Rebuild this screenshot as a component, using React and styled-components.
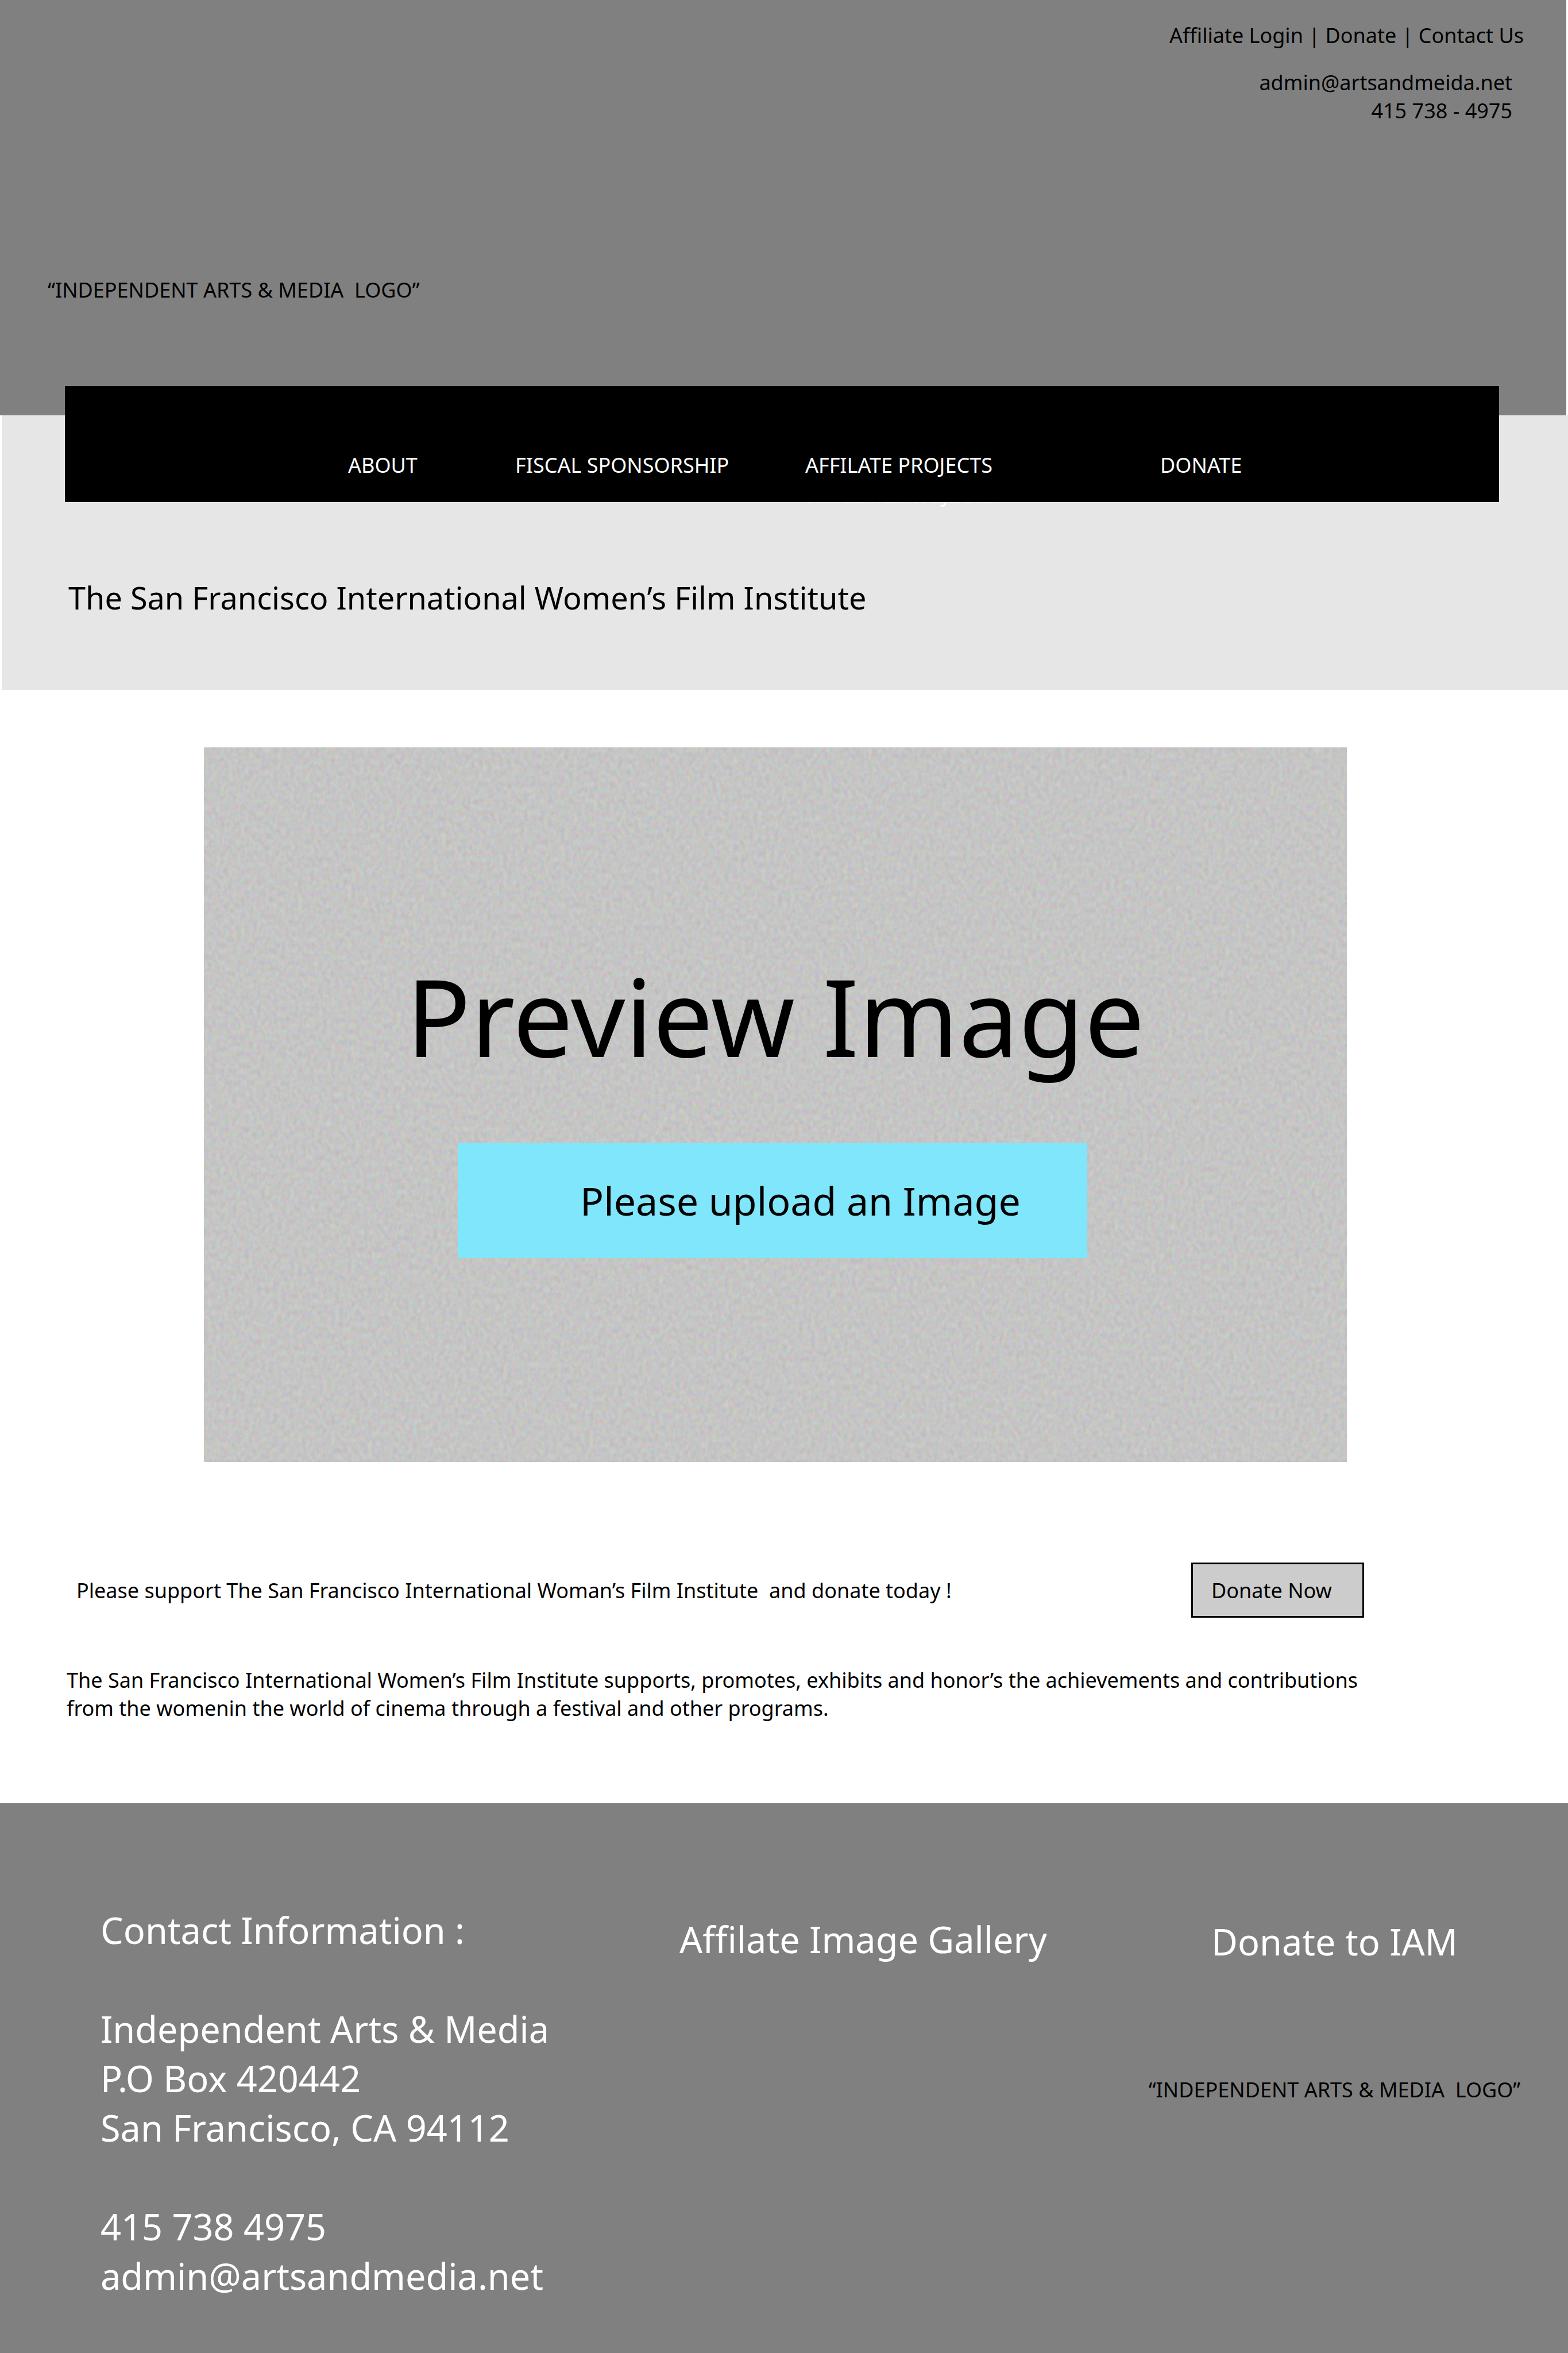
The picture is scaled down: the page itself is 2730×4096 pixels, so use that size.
import React from "react";
import styled, { createGlobalStyle } from "styled-components";

const GlobalStyle = createGlobalStyle`
  *, *::before, *::after { box-sizing: border-box; }
  body {
    margin: 0;
    background: #fff;
    color: #000;
    font-family: "Noto Sans", "Open Sans", sans-serif;
    font-size: 36px;
    line-height: 49px;
  }
  h1, h2, p, ul { margin: 0; padding: 0; font-weight: 400; }
  ul { list-style: none; }
  a { color: inherit; text-decoration: none; }
  button { font-family: inherit; color: inherit; cursor: pointer; text-align: left; }
`;

const Header = styled.header`
  display: flex;
  flex-direction: column;
  margin-right: 3px;
  padding: 37px 74px 194px 83px;
  background: #808080;
`;

const UtilityNav = styled.nav`
  align-self: flex-end;
  white-space: pre;
`;

const HeaderContact = styled.address`
  display: flex;
  flex-direction: column;
  align-items: flex-end;
  margin-top: 33px;
  padding-right: 20px;
  font-style: normal;
`;

const Logo = styled.p`
  white-space: pre-wrap;
`;

const HeaderLogo = styled(Logo)`
  margin-top: 263px;
`;

const Intro = styled.section`
  display: flow-root;
  isolation: isolate;
  margin-left: 3px;
  padding-bottom: 125px;
  background: #e6e6e6;
`;

const MainNav = styled.nav`
  position: relative;
  margin: -51px 120px 0 110px;
  padding: 113px 0 40px;
  background: #000;
  color: #fff;
`;

const NavList = styled.ul`
  display: grid;
  grid-template-columns: 493fr 291fr 505fr 618fr 590fr;
`;

const NavItem = styled.li`
  position: relative;

  &:first-child { grid-column: 2; }
`;

/* Second copy of a label that peeks out from under the bar. */
const Echo = styled.span`
  position: absolute;
  z-index: -1;
  top: 52px;
  left: 5px;
`;

const PageTitle = styled.h1`
  margin: 130px 116px 0;
  font-size: 54px;
  line-height: 72px;
`;

const Preview = styled.section`
  position: relative;
  isolation: isolate;
  display: flex;
  flex-direction: column;
  align-items: center;
  aspect-ratio: 1990 / 1244;
  margin: 100px 385px 0 355px;
  padding-top: 367px;
  background: #c5c5c4;
`;

const Grain = styled.svg`
  position: absolute;
  z-index: -1;
  inset: 0;
  width: 100%;
  height: 100%;
`;

const PreviewTitle = styled.h2`
  font-size: 186px;
  line-height: 200px;
`;

const UploadButton = styled.button`
  align-self: flex-start;
  width: 1096px;
  height: 200px;
  margin: 122px 0 0 442px;
  padding: 0 0 0 213px;
  border: 0;
  background: #7fe6fb;
  font-size: 68px;
  line-height: 100px;
`;

const Support = styled.section`
  display: flex;
  align-items: center;
  justify-content: space-between;
  margin: 175px 355px 0 133px;
`;

const SupportText = styled.p`
  white-space: pre-wrap;
`;

const DonateButton = styled.button`
  width: 301px;
  height: 96px;
  padding: 0 0 0 32px;
  border: 3px solid #000;
  background: #ccc;
  font-size: 36px;
  line-height: 49px;
`;

const Description = styled.p`
  margin: 84px 355px 141px 116px;
`;

const Footer = styled.footer`
  display: grid;
  grid-template-columns: 1008fr 816fr 649fr;
  padding: 178px 82px 91px 175px;
  background: #808080;
`;

const FooterColumn = styled.div`
  display: flex;
  flex-direction: column;
  align-items: ${(p) => (p.$centered ? "center" : "flex-start")};
  padding-top: ${(p) => p.$top || 0}px;
`;

const FooterTitle = styled.h2`
  color: #fff;
  font-size: 63px;
  line-height: 86px;
`;

const FooterContact = styled.address`
  display: flex;
  flex-direction: column;
  margin-top: 86px;
  color: #fff;
  font-size: 63px;
  font-style: normal;
  line-height: 86px;
`;

const FooterLogo = styled(Logo)`
  margin-top: 190px;
`;

const logoText = "“INDEPENDENT ARTS & MEDIA  LOGO”";

const navItems = [
  { label: "ABOUT" },
  { label: "FISCAL SPONSORSHIP" },
  { label: "AFFILATE PROJECTS", echo: true },
  { label: "DONATE" },
];

export default function App() {
  return (
    <>
      <GlobalStyle />
      <Header>
        <UtilityNav aria-label="Account">
          <a href="#login">Affiliate Login</a> | <a href="#donate">Donate</a> | <a href="#contact">Contact Us</a>
        </UtilityNav>
        <HeaderContact>
          <a href="mailto:admin@artsandmeida.net">admin@artsandmeida.net</a>
          <a href="tel:4157384975">415 738 - 4975</a>
        </HeaderContact>
        <HeaderLogo>{logoText}</HeaderLogo>
      </Header>

      <main>
        <Intro>
          <MainNav aria-label="Main">
            <NavList>
              {navItems.map(({ label, echo }) => (
                <NavItem key={label}>
                  <a href="#top">{label}</a>
                  {echo && <Echo aria-hidden="true">{label}</Echo>}
                </NavItem>
              ))}
            </NavList>
          </MainNav>
          <PageTitle>The San Francisco International Women’s Film Institute</PageTitle>
        </Intro>

        <Preview>
          <Grain aria-hidden="true">
            <filter id="grain" x="0" y="0" width="100%" height="100%" colorInterpolationFilters="sRGB">
              <feTurbulence type="fractalNoise" baseFrequency="0.14 0.1" numOctaves="3" seed="4" />
              <feColorMatrix values="0.13 0 0 0 0.707  0 0.13 0 0 0.707  0 0 0.13 0 0.704  0 0 0 0 1" />
            </filter>
            <rect width="100%" height="100%" filter="url(#grain)" />
          </Grain>
          <PreviewTitle>Preview Image</PreviewTitle>
          <UploadButton type="button">Please upload an Image</UploadButton>
        </Preview>

        <Support>
          <SupportText>
            {"Please support The San Francisco International Woman’s Film Institute  and donate today !"}
          </SupportText>
          <DonateButton type="button">Donate Now</DonateButton>
        </Support>

        <Description>
          The San Francisco International Women’s Film Institute supports, promotes, exhibits and honor’s the
          achievements and contributions from the womenin the world of cinema through a festival and other programs.
        </Description>
      </main>

      <Footer>
        <FooterColumn>
          <FooterTitle>Contact Information :</FooterTitle>
          <FooterContact>
            <span>Independent Arts &amp; Media</span>
            <span>P.O Box 420442</span>
            <span>San Francisco, CA 94112</span>
          </FooterContact>
          <FooterContact>
            <a href="tel:4157384975">415 738 4975</a>
            <a href="mailto:admin@artsandmedia.net">admin@artsandmedia.net</a>
          </FooterContact>
        </FooterColumn>
        <FooterColumn $top={16}>
          <FooterTitle>
            <a href="#gallery">Affilate Image Gallery</a>
          </FooterTitle>
        </FooterColumn>
        <FooterColumn $top={20} $centered>
          <FooterTitle>
            <a href="#donate">Donate to IAM</a>
          </FooterTitle>
          <FooterLogo>{logoText}</FooterLogo>
        </FooterColumn>
      </Footer>
    </>
  );
}
